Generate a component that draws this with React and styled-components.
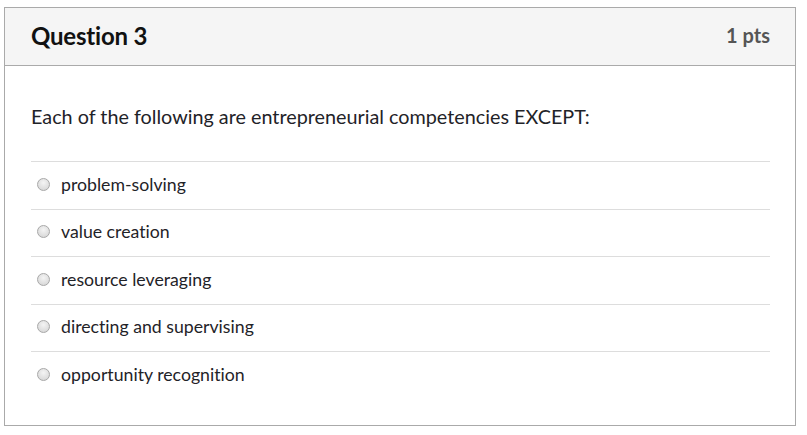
import React from "react";
import styled, { createGlobalStyle } from "styled-components";

const Global = createGlobalStyle`
  html, body { margin: 0; padding: 0; background: #fff; }
  body {
    font-family: Lato, "Open Sans", sans-serif;
    color: #1f2328;
    font-variant-ligatures: none;
    font-feature-settings: "liga" 0;
  }
`;

const Page = styled.div`
  padding: 7px 11px 9px 4px;
`;

const Card = styled.div`
  border: 1px solid #aaaaaa;
  background: #fff;
`;

const Header = styled.div`
  display: flex;
  align-items: center;
  justify-content: space-between;
  box-sizing: border-box;
  height: 58px;
  padding: 0 25px 3px 26px;
  background: #f5f5f5;
  border-bottom: 1px solid #aaaaaa;
`;

const Title = styled.h2`
  margin: 0;
  font-size: 24px;
  font-weight: 700;
  color: #111;
  letter-spacing: -0.2px;
`;

const Points = styled.span`
  font-size: 20px;
  font-weight: 700;
  color: #555;
`;

const Body = styled.div`
  padding: 37px 25px 26px 26px;
`;

const Prompt = styled.p`
  margin: 0 0 31px;
  font-size: 19.8px;
  line-height: 27px;
  color: #1f2328;
`;

const Answers = styled.div`
  display: flex;
  flex-direction: column;
`;

const Answer = styled.label`
  display: flex;
  align-items: center;
  gap: 11px;
  box-sizing: border-box;
  height: 47.5px;
  padding: 0 0 2px 6px;
  border-top: 1px solid #dddddd;
  font-size: 17.7px;
  color: #1f2328;
  cursor: pointer;
`;

const Radio = styled.span`
  width: 13px;
  height: 13px;
  border-radius: 50%;
  box-sizing: border-box;
  border: 1px solid #a8a8a8;
  background: radial-gradient(circle at 50% 35%, #f4f4f4 0%, #dcdcdc 70%, #cfcfcf 100%);
  flex-shrink: 0;
`;

const answers = [
  "problem-solving",
  "value creation",
  "resource leveraging",
  "directing and supervising",
  "opportunity recognition",
];

export default function App() {
  return (
    <>
      <Global />
      <Page>
        <Card>
          <Header>
            <Title>Question 3</Title>
            <Points>1 pts</Points>
          </Header>
          <Body>
            <Prompt>Each of the following are entrepreneurial competencies EXCEPT:</Prompt>
            <Answers>
              {answers.map((a) => (
                <Answer key={a}>
                  <Radio />
                  {a}
                </Answer>
              ))}
            </Answers>
          </Body>
        </Card>
      </Page>
    </>
  );
}
